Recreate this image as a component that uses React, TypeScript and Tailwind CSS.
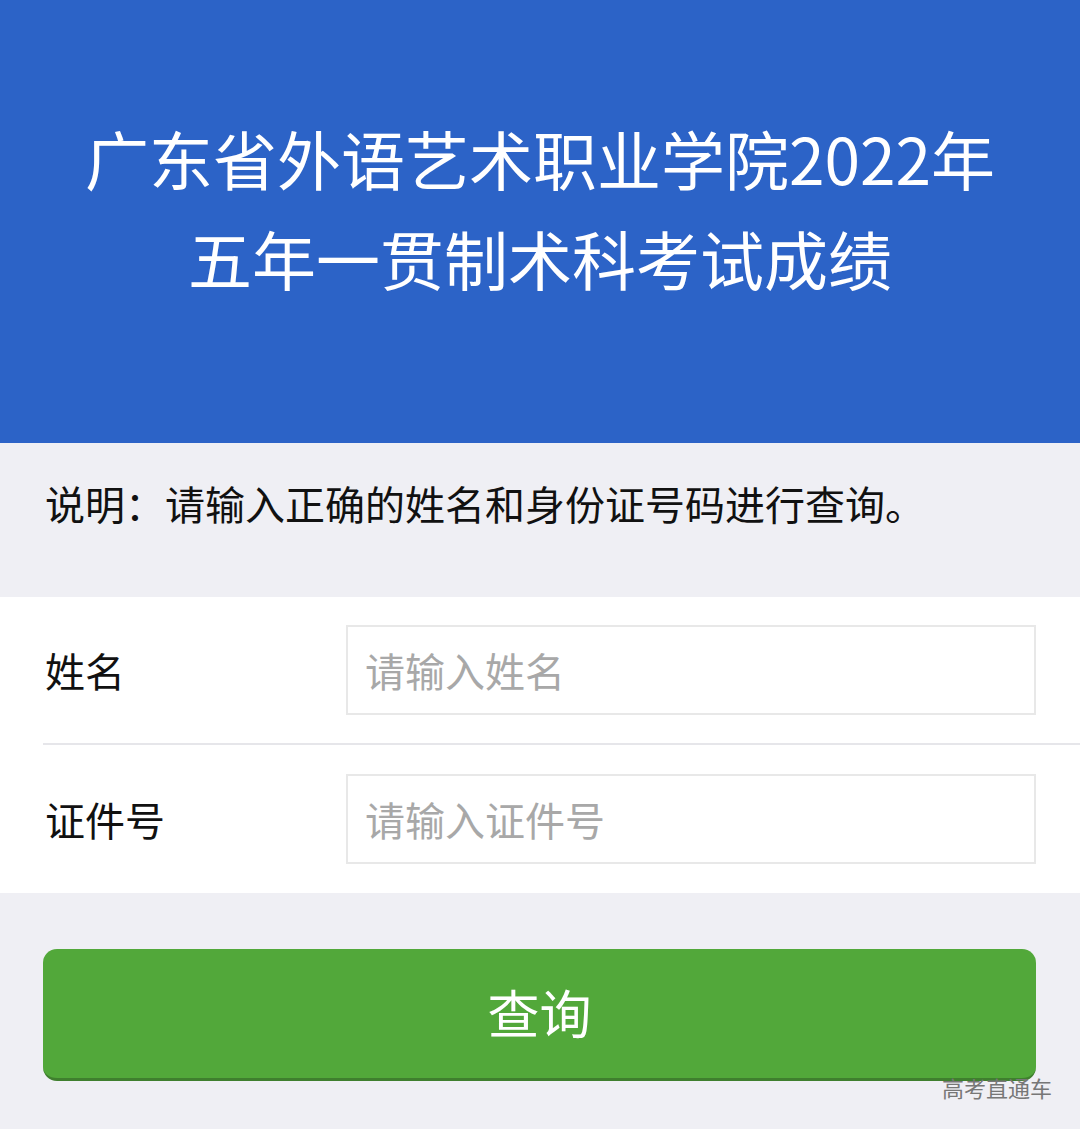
import React from 'react';

const font = { fontFamily: '"Noto Sans CJK SC", "Noto Sans", sans-serif' };

export default function App() {
  return (
    <div className="w-[1080px] h-[1129px] bg-[#efeff4] relative overflow-hidden" style={font}>
      <div className="h-[443px] bg-[#2c63c7] flex flex-col items-center justify-center pb-[30px] text-white text-[64px] leading-[100px]">
        <div>广东省外语艺术职业学院2022年</div>
        <div>五年一贯制术科考试成绩</div>
      </div>
      <div className="h-[154px] flex items-center px-[45px] pb-[34px] text-[40px] text-[#111]">
        说明：请输入正确的姓名和身份证号码进行查询。
      </div>
      <div className="bg-white">
        <div className="h-[148px] flex items-center border-b-2 border-[#e6e6ea] ml-[43px]">
          <div className="w-[303px] pl-[2px] text-[40px] text-[#111]">姓名</div>
          <input
            className="w-[690px] h-[90px] border-2 border-[#e8e8e8] px-[17px] text-[40px] outline-none placeholder:text-[#a8a8a8]"
            style={font}
            placeholder="请输入姓名"
          />
        </div>
        <div className="h-[148px] flex items-center ml-[43px]">
          <div className="w-[303px] pl-[2px] text-[40px] text-[#111]">证件号</div>
          <input
            className="w-[690px] h-[90px] border-2 border-[#e8e8e8] px-[17px] text-[40px] outline-none placeholder:text-[#a8a8a8]"
            style={font}
            placeholder="请输入证件号"
          />
        </div>
      </div>
      <div className="px-[43px] pt-[56px]">
        <button
          className="w-[993px] h-[132px] rounded-[14px] bg-[#52a83a] border-b-[3px] border-[#3f7f2e] text-white text-[52px] pb-[4px]"
          style={font}
        >
          查询
        </button>
      </div>
      <div className="absolute left-[942px] top-[1071px] text-[22px] text-[#777]">高考直通车</div>
    </div>
  );
}
